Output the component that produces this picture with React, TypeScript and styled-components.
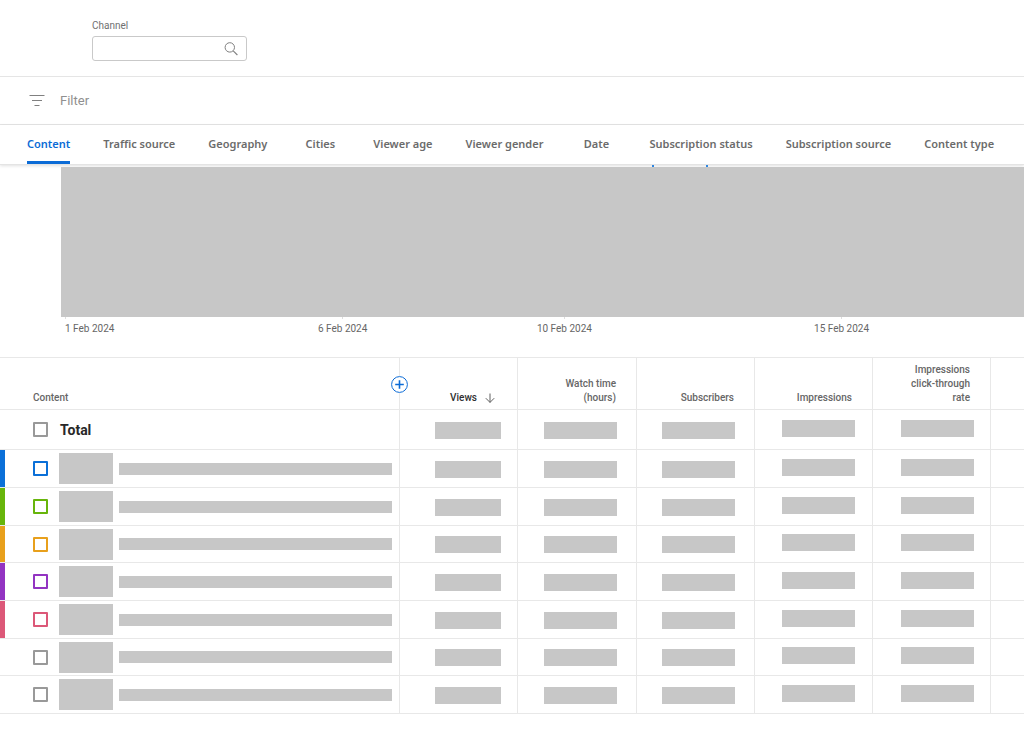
import React from "react";
import styled, { createGlobalStyle } from "styled-components";

const GlobalStyle = createGlobalStyle`
  *, *::before, *::after { box-sizing: border-box; }
  body {
    margin: 0;
    background: #fff;
    color: #666;
    font-family: Roboto, "Liberation Sans", sans-serif;
  }
`;

const Page = styled.div`
  overflow-x: hidden;
`;

const TopBar = styled.header`
  padding: 19px 92px 15px;
  border-bottom: 1px solid #e5e5e5;
`;

const ChannelField = styled.div`
  display: flex;
  flex-direction: column;
  gap: 3px;
  width: 155px;
`;

const FieldLabel = styled.label`
  font-size: 10px;
  line-height: 14px;
  color: #707070;
`;

const SearchBox = styled.div`
  display: flex;
  align-items: center;
  height: 25px;
  padding-right: 8px;
  border: 1px solid #c9c9c9;
  border-radius: 3px;
`;

const SearchInput = styled.input`
  flex: 1;
  min-width: 0;
  height: 100%;
  padding: 0 8px;
  border: 0;
  outline: 0;
  background: transparent;
  font: inherit;
  font-size: 12px;
`;

const FilterBar = styled.div`
  display: flex;
  align-items: center;
  gap: 15px;
  height: 48px;
  padding: 0 29px;
  border-bottom: 1px solid #e5e5e5;
`;

const FilterInput = styled.input`
  flex: 1;
  padding: 0;
  border: 0;
  outline: 0;
  font: inherit;
  font-size: 13px;
  line-height: 18px;
  &::placeholder { color: #909090; opacity: 1; }
`;

const Tabs = styled.nav`
  position: relative;
  display: flex;
  gap: 33px;
  height: 40px;
  padding: 0 27px;
  border-bottom: 1px solid #e4e4e4;
  box-shadow: 0 1px 3px rgba(0, 0, 0, 0.12);
`;

const Tab = styled.button<{ $active?: boolean }>`
  flex: none;
  min-width: 40px;
  height: 39px;
  padding: 0;
  border: 0;
  border-top: 2px solid transparent;
  border-bottom: 3px solid ${(p) => (p.$active ? "#0b6bd6" : "transparent")};
  background: transparent;
  color: ${(p) => (p.$active ? "#0b6bd6" : "#6b6b6b")};
  font-family: "Noto Sans", "Open Sans", sans-serif;
  font-size: 11px;
  font-weight: 600;
  line-height: 16px;
  text-align: center;
  white-space: nowrap;
`;

const ChartSection = styled.section`
  padding: 2px 0 21px 61px;
`;

const Plot = styled.div`
  position: relative;
  height: 150px;
  background: #c7c7c7;
`;

const Peak = styled.span<{ $at: number }>`
  position: absolute;
  top: -2px;
  left: ${(p) => p.$at}%;
  width: 2px;
  height: 2px;
  background: #2f86e0;
`;

const Axis = styled.div`
  display: grid;
  grid-template-columns: 50fr 40fr 50fr 33fr;
  padding-left: 4px;
`;

const TickSlot = styled.div<{ $start?: boolean }>`
  display: flex;
  flex-direction: column;
  align-items: ${(p) => (p.$start ? "flex-start" : "center")};
  width: 1px;
  font-size: 10px;
  line-height: 14px;
  color: #666;
  white-space: nowrap;
  &::before {
    content: "";
    width: 1px;
    height: 2px;
    margin-bottom: 3px;
    background: #ddd;
  }
`;

const Table = styled.table`
  width: 100%;
  table-layout: fixed;
  border-collapse: separate;
  border-spacing: 0;
  border-top: 1px solid #e8e8e8;
`;

const Col = styled.col<{ $width?: number }>`
  ${(p) => (p.$width ? `width: ${p.$width}px;` : "")}
`;

const HeadCell = styled.th<{ $left?: boolean; $dark?: boolean }>`
  position: relative;
  height: 52px;
  padding: 5px ${(p) => (p.$left ? 0 : p.$dark ? 22 : 20)}px 4px 33px;
  border-right: 1px solid #e8e8e8;
  border-bottom: 1px solid #e8e8e8;
  vertical-align: bottom;
  text-align: ${(p) => (p.$left ? "left" : "right")};
  font-size: 10px;
  font-weight: 500;
  line-height: 14px;
  color: ${(p) => (p.$dark ? "#303030" : "#666")};
  white-space: pre-line;
  &:last-child { border-right: 0; }
`;

const SortLabel = styled.span`
  display: inline-flex;
  align-items: center;
  gap: 8px;
`;

const AddButton = styled.button`
  position: absolute;
  top: 18px;
  right: -9px;
  z-index: 1;
  display: flex;
  width: 17px;
  height: 17px;
  padding: 0;
  border: 0;
  border-radius: 50%;
  background: #fff;
`;

const Row = styled.tr<{ $total?: boolean }>`
  height: ${(p) => (p.$total ? 40 : 38)}px;
  &:nth-child(3n + 4) { height: 37px; }
`;

const Cell = styled.td<{ $inset?: number }>`
  padding: 0 ${(p) => p.$inset ?? 0}px 0 0;
  border-right: 1px solid #e8e8e8;
  border-bottom: 1px solid #e8e8e8;
  &:last-child { border-right: 0; }
`;

const ContentCell = styled(Cell)<{ $accent?: string }>`
  padding-left: 33px;
  background: linear-gradient(${(p) => p.$accent ?? "transparent"} 0 0) left / 5px 100% no-repeat;
`;

const Item = styled.div`
  display: flex;
  align-items: center;
`;

const Check = styled.input<{ $color?: string }>`
  appearance: none;
  flex: none;
  width: 15px;
  height: 15px;
  margin: 0 11px 0 0;
  border: 2px solid ${(p) => p.$color ?? "#999"};
  border-radius: 1px;
  background: #fff;
`;

const TotalLabel = styled.label`
  padding-left: 1px;
  font-size: 14px;
  font-weight: 700;
  line-height: 18px;
  color: #282828;
`;

const Thumb = styled.div`
  flex: none;
  width: 54px;
  height: 31px;
  margin-right: 6px;
  background: #c7c7c7;
`;

const TitleBar = styled.div`
  flex: 1;
  height: 12px;
  margin-right: 7px;
  background: #c7c7c7;
`;

const ValueBar = styled.div<{ $width: number; $raised?: boolean }>`
  width: ${(p) => p.$width}px;
  height: 17px;
  margin: ${(p) => (p.$raised ? "0 0 3px auto" : "1px 0 0 auto")};
  background: #c7c7c7;
`;

const tabs = [
  "Content",
  "Traffic source",
  "Geography",
  "Cities",
  "Viewer age",
  "Viewer gender",
  "Date",
  "Subscription status",
  "Subscription source",
  "Content type",
];

const ticks = ["1 Feb 2024", "6 Feb 2024", "10 Feb 2024", "15 Feb 2024"];

const metrics = [
  { label: "Views", width: 118, bar: 66, inset: 16, sorted: true },
  { label: "Watch time\n(hours)", width: 119, bar: 73, inset: 19 },
  { label: "Subscribers", width: 118, bar: 73, inset: 19 },
  { label: "Impressions", width: 118, bar: 73, inset: 17, raised: true },
  { label: "Impressions\nclick-through\nrate", width: 118, bar: 73, inset: 16, raised: true },
];

const accents: (string | undefined)[] = [
  "#0b70d8",
  "#67b50b",
  "#e8a01c",
  "#9334c2",
  "#dc5878",
  undefined,
  undefined,
];

const SearchIcon = () => (
  <svg width="14" height="14" viewBox="0 0 14 14" fill="none" stroke="#808080" strokeWidth="1" aria-hidden="true">
    <circle cx="5.8" cy="5.4" r="4.7" />
    <path d="M9.2 8.8l4.2 4.2" strokeWidth="1.1" />
  </svg>
);

const FilterIcon = () => (
  <svg width="16" height="12" viewBox="0 0 16 12" stroke="#808080" strokeWidth="1" aria-hidden="true">
    <path d="M0.5 0.5h15M3 5.5h10M5.5 10.5h5" />
  </svg>
);

const ArrowDown = () => (
  <svg width="10" height="10" viewBox="0 0 10 10" fill="none" stroke="#606060" strokeWidth="1" aria-hidden="true">
    <path d="M5 0.5v9M0.8 5.2L5 9.4l4.2-4.2" />
  </svg>
);

const PlusIcon = () => (
  <svg width="17" height="17" viewBox="0 0 17 17" fill="none" stroke="#0b6bd6" aria-hidden="true">
    <circle cx="8.5" cy="8.5" r="7.9" strokeWidth="1" />
    <path d="M8.5 4.2v8.6M4.2 8.5h8.6" strokeWidth="1.6" />
  </svg>
);

const MetricCells = () => (
  <>
    {metrics.map((m) => (
      <Cell key={m.label} $inset={m.inset}>
        <ValueBar $width={m.bar} $raised={m.raised} />
      </Cell>
    ))}
    <Cell />
  </>
);

export default function App() {
  return (
    <Page>
      <GlobalStyle />
      <TopBar>
        <ChannelField>
          <FieldLabel htmlFor="channel">Channel</FieldLabel>
          <SearchBox>
            <SearchInput id="channel" type="text" />
            <SearchIcon />
          </SearchBox>
        </ChannelField>
      </TopBar>
      <FilterBar>
        <FilterIcon />
        <FilterInput type="text" placeholder="Filter" aria-label="Filter" />
      </FilterBar>
      <Tabs>
        {tabs.map((t, i) => (
          <Tab key={t} type="button" $active={i === 0}>
            {t}
          </Tab>
        ))}
      </Tabs>
      <ChartSection>
        <Plot>
          <Peak $at={61.4} />
          <Peak $at={67} />
        </Plot>
        <Axis>
          {ticks.map((t, i) => (
            <TickSlot key={t} $start={i === 0}>
              {t}
            </TickSlot>
          ))}
        </Axis>
      </ChartSection>
      <Table>
        <colgroup>
          <Col $width={400} />
          {metrics.map((m) => (
            <Col key={m.label} $width={m.width} />
          ))}
          <Col />
        </colgroup>
        <thead>
          <tr>
            <HeadCell $left scope="col">
              Content
              <AddButton type="button" aria-label="Add column">
                <PlusIcon />
              </AddButton>
            </HeadCell>
            {metrics.map((m) => (
              <HeadCell key={m.label} scope="col" $dark={m.sorted}>
                {m.sorted ? (
                  <SortLabel>
                    {m.label}
                    <ArrowDown />
                  </SortLabel>
                ) : (
                  m.label
                )}
              </HeadCell>
            ))}
            <HeadCell as="td" />
          </tr>
        </thead>
        <tbody>
          <Row $total>
            <ContentCell>
              <Item>
                <Check type="checkbox" id="total" />
                <TotalLabel htmlFor="total">Total</TotalLabel>
              </Item>
            </ContentCell>
            <MetricCells />
          </Row>
          {accents.map((color, i) => (
            <Row key={i}>
              <ContentCell $accent={color}>
                <Item>
                  <Check type="checkbox" $color={color} aria-label={`Select row ${i + 1}`} />
                  <Thumb />
                  <TitleBar />
                </Item>
              </ContentCell>
              <MetricCells />
            </Row>
          ))}
        </tbody>
      </Table>
    </Page>
  );
}
